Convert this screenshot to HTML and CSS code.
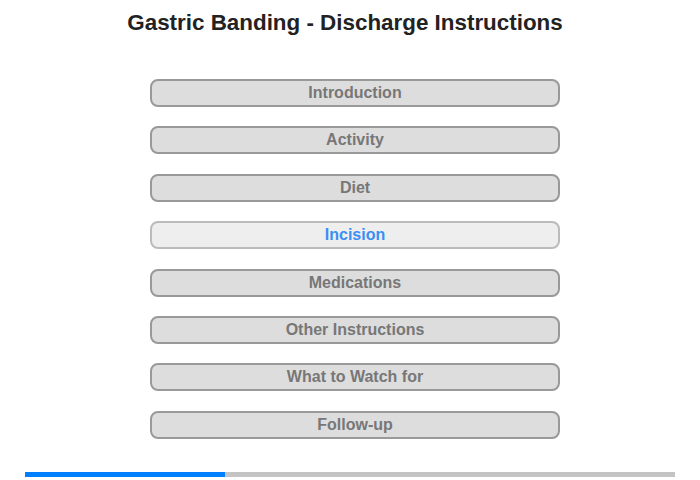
FILE: index.html
```html
<!DOCTYPE html>
<html lang="en">
<head>
  <meta charset="UTF-8">
  <meta name="viewport" content="width=device-width, initial-scale=1.0">
  <title>Gastric Banding - Discharge Instructions</title>
  <link rel="stylesheet" href="styles.css">
</head>
<body>
  <h1 class="title">Gastric Banding - Discharge Instructions</h1>

  <div class="menu">
    <a href="#" class="menu-item">Introduction</a>
    <a href="#" class="menu-item">Activity</a>
    <a href="#" class="menu-item">Diet</a>
    <a href="#" class="menu-item active">Incision</a>
    <a href="#" class="menu-item">Medications</a>
    <a href="#" class="menu-item">Other Instructions</a>
    <a href="#" class="menu-item">What to Watch for</a>
    <a href="#" class="menu-item">Follow-up</a>
  </div>

  <div class="progress">
    <div class="progress-fill" style="width: 200px"></div>
  </div>
</body>
</html>
```

FILE: styles.css
```css
body {
  font-family: "Liberation Sans", Arial, sans-serif;
  margin: 0;
  background: #fff;
  width: 700px;
  height: 480px;
}
.title {
  margin: 0;
  padding-top: 9px;
  font-size: 22.4px;
  line-height: 27px;
  color: #222;
  text-align: center;
  padding-right: 10px;
}
.menu {
  display: flex;
  flex-direction: column;
  gap: 19.4px;
  width: 410px;
  margin: 43px 0 0 150px;
}
.menu-item {
  display: block;
  box-sizing: border-box;
  height: 28px;
  line-height: 24px;
  border: 2px solid #999;
  border-radius: 8px;
  background-color: #ddd;
  color: #777;
  font-size: 16px;
  font-weight: bold;
  text-align: center;
  text-decoration: none;
}
.menu-item.active {
  background-color: #eee;
  border-color: #bbb;
  color: #3b8ff3;
}
.progress {
  margin: 33px 0 0 25px;
  width: 650px;
  height: 5px;
  background-color: #c4c4c4;
}
.progress-fill {
  height: 100%;
  background-color: #0080ff;
}
```
